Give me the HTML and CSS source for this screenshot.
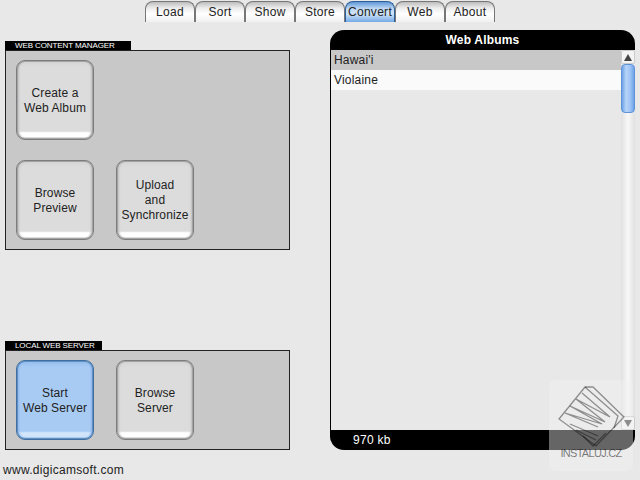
FILE: index.html
```html
<!DOCTYPE html>
<html lang="en">
<head>
  <meta charset="UTF-8">
  <title>Web Albums</title>
  <link rel="stylesheet" href="styles.css">
</head>
<body>
  <div class="tabs">
    <div class="tab">Load</div>
    <div class="tab">Sort</div>
    <div class="tab">Show</div>
    <div class="tab">Store</div>
    <div class="tab active">Convert</div>
    <div class="tab">Web</div>
    <div class="tab">About</div>
  </div>

  <div class="main">
    <div class="left">
      <div class="section">
        <div class="section-label label-manager">WEB CONTENT MANAGER</div>
        <div class="panel panel-tall">
          <div class="btn">Create a<br>Web Album</div>
          <div class="spacer"></div>
          <div class="btn">Browse<br>Preview</div>
          <div class="btn three-lines">Upload<br>and<br>Synchronize</div>
        </div>
      </div>

      <div class="section section-server">
        <div class="section-label label-server">LOCAL WEB SERVER</div>
        <div class="panel">
          <div class="btn blue">Start<br>Web Server</div>
          <div class="btn">Browse<br>Server</div>
        </div>
      </div>

      <div class="site">www.digicamsoft.com</div>
    </div>

    <div class="albums">
      <div class="albums-head">Web Albums</div>
      <div class="albums-body">
        <div class="list">
          <div class="row row-grey">Hawai'i</div>
          <div class="row row-white">Violaine</div>
        </div>
        <div class="scrollbar">
          <div class="arrow"><span class="tri-up"></span></div>
          <div class="thumb"></div>
          <div class="track"></div>
          <div class="arrow"><span class="tri-down"></span></div>
        </div>
      </div>
      <div class="albums-foot">970 kb</div>
    </div>
  </div>

  <div class="watermark">
    <svg class="wm-logo" width="67" height="62" viewBox="0 0 67 62" fill="none" stroke="#000" stroke-opacity="0.4" stroke-width="1.3">
      <path d="M1 33 L27 1 L35 1 L66 31 L38 60 Z"/>
      <path d="M27 1 L60 30 L56 42"/>
      <path d="M24 7 L52 31 L18 13 L47 36 L12 20 L44 38 L7 27 L40 41"/>
      <path d="M12 38 L40 50 M18 44 L38 54"/>
      <path d="M25 50 L35 60 L48 47"/>
    </svg>
    <div class="wm-text">INSTALUJ.CZ</div>
  </div>
</body>
</html>
```

FILE: styles.css
```css
* {
  box-sizing: border-box;
}

body {
  margin: 0;
  width: 640px;
  height: 480px;
  overflow: hidden;
  position: relative;
  background: #e8e8e8;
  color: #222;
  font-family: "Liberation Sans", Arial, sans-serif;
  font-size: 12px;
  letter-spacing: 0.3px;
}

.tabs {
  display: flex;
  justify-content: center;
  height: 22px;
  padding-top: 1px;
}

.tab {
  width: 50px;
  height: 21px;
  display: flex;
  align-items: center;
  justify-content: center;
  border: 1px solid #777;
  border-bottom: none;
  border-radius: 8px 8px 0 0;
  background: linear-gradient(#bdbdbd, #ececec 30%, #fff 60%, #f0f0f0);
}

.tab.active {
  border-color: #2d5f9a;
  background: linear-gradient(#5f97d6, #c4dcf6 35%, #cfe2f8 60%, #74a9e6);
}

.main {
  display: flex;
  padding-left: 5px;
}

.left {
  width: 325px;
  padding-top: 19px;
}

.section-server {
  margin-top: 91px;
}

.section-label {
  height: 9px;
  background: #000;
  color: #fff;
  font-size: 8px;
  line-height: 9px;
  letter-spacing: -0.1px;
  padding-left: 10px;
  white-space: nowrap;
}

.label-manager {
  width: 126px;
}

.label-server {
  width: 97px;
}

.panel {
  width: 285px;
  display: grid;
  grid-template-columns: 78px 78px;
  grid-auto-rows: 80px;
  gap: 20px 22px;
  padding: 9px 10px;
  border: 1px solid #222;
  background: #c8c8c8;
}

.btn {
  display: flex;
  align-items: center;
  justify-content: center;
  text-align: center;
  line-height: 15px;
  padding-top: 2px;
  letter-spacing: 0.1px;
  border: 1px solid #7c7c7c;
  border-radius: 9px;
  background: linear-gradient(#d4d4d4, #dcdcdc 8%, #dcdcdc 90%, #fff 92%, #fff 97%, #aaa);
  box-shadow: inset 0 0 0 1px #a4a4a4, inset 2px 0 2px #c0c0c0, inset -2px 0 2px #c0c0c0;
}

.three-lines {
  padding-top: 0;
}

.btn.blue {
  border-color: #3f6f9f;
  background: linear-gradient(#94bdec, #a8cbf4 8%, #a8cbf4 90%, #d2e6fb 92%, #cfe4fa 97%, #7aa6d8);
  box-shadow: inset 0 0 0 1px #5f8fc4, inset 2px 0 2px #90b8e8, inset -2px 0 2px #90b8e8;
}

.site {
  margin: 13px 0 0 -2px;
  line-height: 14px;
}

.albums {
  width: 305px;
  height: 420px;
  margin-top: 8px;
  display: flex;
  flex-direction: column;
}

.albums-head {
  height: 20px;
  flex: none;
  background: #000;
  color: #fff;
  font-weight: bold;
  letter-spacing: 0.2px;
  text-align: center;
  line-height: 20px;
  border-radius: 14px 14px 0 0;
}

.albums-body {
  flex: 1;
  display: flex;
  border-left: 1px solid #000;
  min-height: 0;
}

.list {
  flex: 1;
}

.row {
  height: 20px;
  padding-left: 3px;
  line-height: 20px;
  letter-spacing: 0.2px;
}

.row-grey {
  background: #c8c8c8;
}

.row-white {
  background: #fafafa;
}

.scrollbar {
  width: 14px;
  display: flex;
  flex-direction: column;
}

.arrow {
  height: 14px;
  flex: none;
  display: flex;
  align-items: center;
  justify-content: center;
  background: #f4f4f4;
  border: 1px solid #ccc;
  border-radius: 2px;
}

.tri-up,
.tri-down {
  width: 0;
  height: 0;
  border-left: 4px solid transparent;
  border-right: 4px solid transparent;
}

.tri-up {
  border-bottom: 7px solid #444;
}

.tri-down {
  border-top: 7px solid #444;
}

.thumb {
  height: 49px;
  flex: none;
  border: 1px solid #5f93d8;
  border-radius: 4px;
  background: linear-gradient(90deg, #6ea3e8, #b8d4f8 35%, #9cc2f4 70%, #6ea3e8);
}

.track {
  flex: 1;
  background: linear-gradient(90deg, #e0e0e0, #f8f8f8 50%, #e0e0e0);
}

.albums-foot {
  height: 20px;
  flex: none;
  background: #000;
  color: #fff;
  line-height: 20px;
  padding-left: 23px;
  border-radius: 0 0 14px 14px;
}

/* sits over the album panel corner */
.watermark {
  position: absolute;
  left: 549px;
  top: 380px;
  width: 84px;
  height: 91px;
  padding-top: 6px;
  border-radius: 6px;
  background: rgba(240, 240, 240, 0.42);
  text-align: center;
}

.wm-logo {
  display: block;
  margin: 0 auto;
}

.wm-text {
  color: rgba(0, 0, 0, 0.5);
  font-size: 11px;
  line-height: 12px;
  letter-spacing: -0.7px;
  margin-top: -1px;
}
```
